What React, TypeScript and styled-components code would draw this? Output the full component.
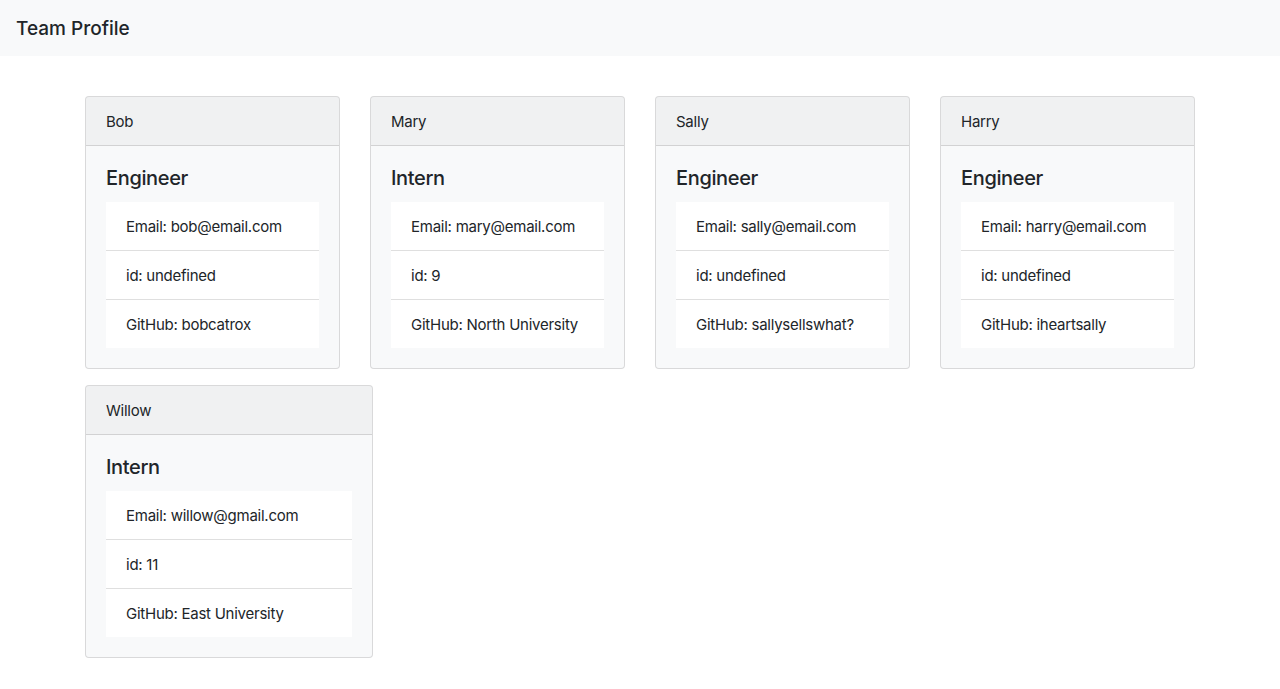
import React from "react";
import styled, { createGlobalStyle } from "styled-components";

const Global = createGlobalStyle`
  * { box-sizing: border-box; }
  body {
    margin: 0;
    font-family: Inter, "Noto Sans", "Liberation Sans", sans-serif;
    font-size: 15px;
    letter-spacing: -0.25px;
    line-height: 24px;
    color: #212529;
    background: #fff;
  }
`;

const Navbar = styled.nav`
  height: 56px;
  background: #f8f9fa;
  display: flex;
  align-items: center;
  padding: 1px 16px 0;
`;

const Brand = styled.span`
  font-size: 19px;
  font-weight: 500;
  letter-spacing: 0;
  line-height: 30px;
  color: #212529;
`;

const Container = styled.main`
  max-width: 1140px;
  margin: 0 auto;
  padding: 40px 15px 0;
  display: flex;
  flex-wrap: wrap;
  column-gap: 30px;
  row-gap: 16px;
  align-items: flex-start;
`;

const Card = styled.section<{ $width: number }>`
  width: ${(p) => p.$width}px;
  border: 1px solid rgba(0, 0, 0, 0.125);
  border-radius: 4px;
  background: #f8f9fa;
  overflow: hidden;
`;

const CardHeader = styled.div`
  padding: 13px 20px 11px;
  background: rgba(0, 0, 0, 0.03);
  border-bottom: 1px solid rgba(0, 0, 0, 0.125);
  line-height: 24px;
`;

const CardBody = styled.div`
  padding: 20px;
`;

const Role = styled.h5`
  margin: 0 0 12px;
  font-size: 20px;
  font-weight: 500;
  letter-spacing: -0.35px;
  line-height: 24px;
`;

const List = styled.ul`
  margin: 0;
  padding: 0;
  list-style: none;
  background: #fff;
`;

const Item = styled.li`
  padding: 13px 20px 11px;
  line-height: 24px;
  white-space: nowrap;
  & + & {
    border-top: 1px solid rgba(0, 0, 0, 0.125);
  }
`;

type Member = {
  name: string;
  role: string;
  email: string;
  id: string;
  extra: string;
  width: number;
};

const members: Member[] = [
  { name: "Bob", role: "Engineer", email: "bob@email.com", id: "undefined", extra: "GitHub: bobcatrox", width: 255 },
  { name: "Mary", role: "Intern", email: "mary@email.com", id: "9", extra: "GitHub: North University", width: 255 },
  { name: "Sally", role: "Engineer", email: "sally@email.com", id: "undefined", extra: "GitHub: sallysellswhat?", width: 255 },
  { name: "Harry", role: "Engineer", email: "harry@email.com", id: "undefined", extra: "GitHub: iheartsally", width: 255 },
  { name: "Willow", role: "Intern", email: "willow@gmail.com", id: "11", extra: "GitHub: East University", width: 288 },
];

export default function App() {
  return (
    <>
      <Global />
      <Navbar>
        <Brand>Team Profile</Brand>
      </Navbar>
      <Container>
        {members.map((m) => (
          <Card key={m.name} $width={m.width}>
            <CardHeader>{m.name}</CardHeader>
            <CardBody>
              <Role>{m.role}</Role>
              <List>
                <Item>Email: {m.email}</Item>
                <Item>id: {m.id}</Item>
                <Item>{m.extra}</Item>
              </List>
            </CardBody>
          </Card>
        ))}
      </Container>
    </>
  );
}
